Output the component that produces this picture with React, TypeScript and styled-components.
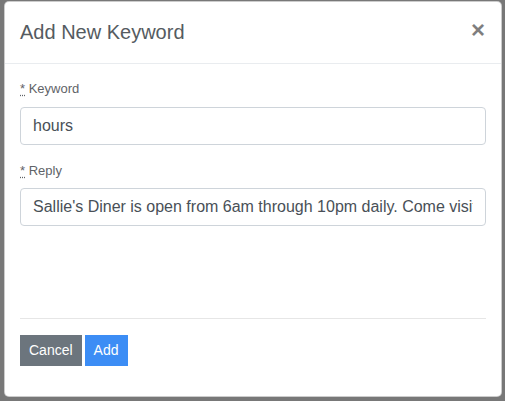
import React from 'react';
import styled, { createGlobalStyle } from 'styled-components';

const GlobalStyle = createGlobalStyle`
  html, body {
    margin: 0;
    padding: 0;
    background: #787878;
    font-family: 'Liberation Sans', Arial, sans-serif;
  }
  * {
    box-sizing: border-box;
  }
`;

const Backdrop = styled.div`
  width: 505px;
  height: 401px;
  padding: 1px 3px 0 4px;
  overflow: hidden;
`;

const Dialog = styled.div`
  background: #fff;
  border: 1px solid rgba(0, 0, 0, 0.2);
  border-radius: 5px;
  display: flex;
  flex-direction: column;
  height: 396px;
  width: 498px;
`;

const Header = styled.div`
  align-items: flex-start;
  border-bottom: 1px solid #e9ecef;
  display: flex;
  padding: 15px 16px 16px 15px;
`;

const Title = styled.h5`
  color: #555b61;
  font-size: 20px;
  font-weight: 400;
  line-height: 30px;
  margin: 0;
`;

const Close = styled.button`
  background: transparent;
  border: none;
  color: #000;
  cursor: pointer;
  font-family: 'Liberation Sans', Arial, sans-serif;
  font-size: 24px;
  font-weight: 700;
  line-height: 1;
  margin-left: auto;
  margin-top: 1px;
  opacity: 0.5;
  padding: 0;
`;

const Body = styled.div`
  display: flex;
  flex: 1;
  flex-direction: column;
  padding: 15px 15px 16px;
`;

const FormGroup = styled.div`
  margin-bottom: 16px;
`;

const Label = styled.label`
  color: #5f6368;
  display: block;
  font-size: 13px;
  line-height: 19.5px;
  margin-bottom: 8px;
`;

const Required = styled.abbr`
  text-decoration: underline dotted;
  text-underline-offset: 2px;
`;

const Input = styled.input`
  border: 1px solid #ced4da;
  border-radius: 4px;
  color: #495057;
  display: block;
  font-family: 'Liberation Sans', Arial, sans-serif;
  font-size: 16px;
  height: 38px;
  line-height: 24px;
  padding: 6px 12px;
  width: 100%;
`;

const Spacer = styled.div`
  height: 76px;
`;

const Rule = styled.hr`
  border: none;
  border-top: 1px solid #e6e6e6;
  margin: 0 0 16px;
`;

const ButtonRow = styled.div`
  display: flex;
  gap: 3px;
`;

const Button = styled.button<{ $variant: 'secondary' | 'primary' }>`
  background: ${(p) => (p.$variant === 'primary' ? '#3c8df5' : '#6c757d')};
  border: 1px solid ${(p) => (p.$variant === 'primary' ? '#3c8df5' : '#6c757d')};
  border-radius: 0;
  color: #fff;
  cursor: pointer;
  font-family: 'Liberation Sans', Arial, sans-serif;
  font-size: 14px;
  height: 31px;
  line-height: 21px;
  padding: 4px 8px;
`;

const App: React.FunctionComponent = () => {
  return (
    <>
      <GlobalStyle />
      <Backdrop>
        <Dialog>
          <Header>
            <Title>Add New Keyword</Title>
            <Close aria-label="Close">×</Close>
          </Header>
          <Body>
            <FormGroup>
              <Label>
                <Required title="required">*</Required> Keyword
              </Label>
              <Input defaultValue="hours" />
            </FormGroup>
            <FormGroup>
              <Label>
                <Required title="required">*</Required> Reply
              </Label>
              <Input defaultValue="Sallie's Diner is open from 6am through 10pm daily. Come visit us!" />
            </FormGroup>
            <Spacer />
            <Rule />
            <ButtonRow>
              <Button $variant="secondary">Cancel</Button>
              <Button $variant="primary">Add</Button>
            </ButtonRow>
          </Body>
        </Dialog>
      </Backdrop>
    </>
  );
};

export default App;
